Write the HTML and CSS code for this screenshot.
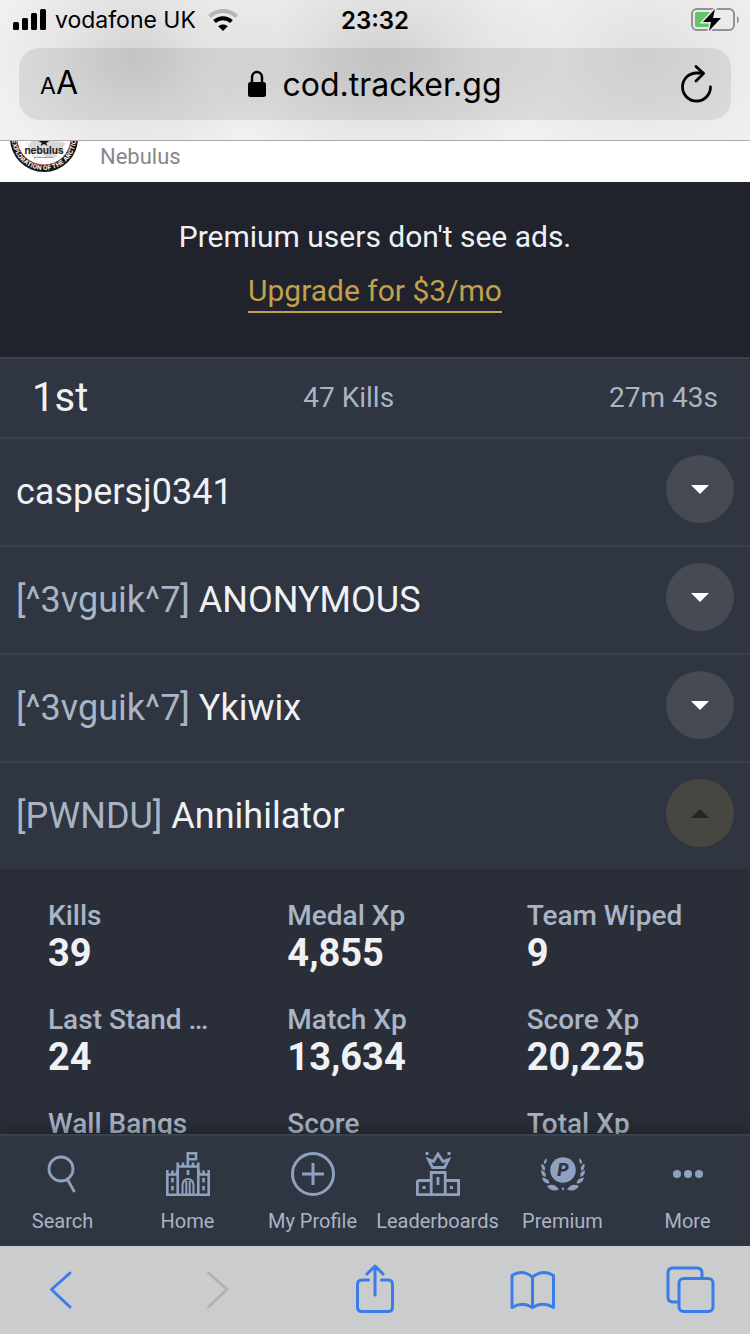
FILE: index.html
```html
<!DOCTYPE html>
<html lang="en">
<head>
    <meta charset="UTF-8">
    <meta name="viewport" content="width=device-width, initial-scale=1.0">
    <title>Warzone Match - COD Tracker</title>
    <link rel="stylesheet" href="styles.css">
</head>
<body>
    <header class="browser-top">
        <div class="status-bar">
            <div class="carrier">
                <svg class="signal" width="34" height="22" viewBox="0 0 34 22">
                    <rect x="0" y="13" width="6" height="8" rx="1.5"/>
                    <rect x="9" y="9" width="6" height="12" rx="1.5"/>
                    <rect x="18" y="4" width="6" height="17" rx="1.5"/>
                    <rect x="27" y="0" width="6" height="21" rx="1.5"/>
                </svg>
                <span>vodafone UK</span>
                <svg class="wifi" width="30" height="22" viewBox="0 0 30 22" fill="none">
                    <path d="M1.500 7.500C9 0 21 0 28.500 7.500" stroke="#b5b5b5" stroke-width="4"/>
                    <path d="M6.500 12.500C11.500 8 18.500 8 23.500 12.500" stroke="#000" stroke-width="4"/>
                    <path d="M15 22L10.200 17.200C13 14.800 17 14.800 19.800 17.200Z" fill="#000"/>
                </svg>
            </div>
            <div class="clock">23:32</div>
            <svg class="battery" width="48" height="24" viewBox="0 0 48 24">
                <rect x="1" y="1" width="42" height="21" rx="5" fill="none" stroke="#929292" stroke-width="2"/>
                <path d="M46 8c2.500 1 2.500 6.500 0 7.500z" fill="#929292"/>
                <rect x="4" y="4" width="17" height="15" rx="2" fill="#65c466"/>
                <path d="M24 1L12 14h8l-2 9L30 10h-8l2-9z" fill="#000" stroke="#ececec" stroke-width="3" paint-order="stroke"/>
            </svg>
        </div>
        <div class="address-bar">
            <button class="text-size" aria-label="Text size"><span class="small-a">A</span><span class="big-a">A</span></button>
            <button class="address">
                <svg width="18" height="28" viewBox="0 0 18 28">
                    <path d="M4 13V7.500a5 5.500 0 0 1 10 0V13" fill="none" stroke="#000" stroke-width="2.500"/>
                    <rect x="0" y="12" width="18" height="15" rx="2.500"/>
                </svg>
                <span>cod.tracker.gg</span>
            </button>
            <button class="reload" aria-label="Reload">
                <svg width="32" height="38" viewBox="0 0 32 38" fill="none" stroke="#000" stroke-width="2.800" stroke-linecap="round" stroke-linejoin="round">
                    <path d="M29.500 22A14 14 0 1 1 15.500 8H22"/>
                    <path d="M15 1.500L22.500 8.500L15 16"/>
                </svg>
            </button>
        </div>
    </header>

    <main class="page">
        <div class="ad">
            <svg class="ad-logo" width="68" height="32" viewBox="0 37 68 32">
                <defs>
                    <path id="ring" d="M4 34A30 30 0 0 0 64 34"/>
                </defs>
                <circle cx="34" cy="34" r="34" fill="#171717"/>
                <circle cx="34" cy="34" r="27" fill="#fff" stroke="#b3423e" stroke-width="1"/>
                <path d="M34 37c8 0 17 0 21 2-2 8-9 14-17 15-4-3-8-6-16-6-4-3-4-8 0-11z" fill="#d8d8d8"/>
                <path d="M17 38l8 18M51 38l-7 18M22 52h25" stroke="#d0d0d0" stroke-width=".7"/>
                <path d="M34 33l1.500 4h4l-3.300 2 1.300 3-3.500-2-3.500 2 1.300-3-3.300-2h4z" fill="#111"/>
                <text class="logo-name" x="34" y="50" text-anchor="middle">nebulus</text>
                <path d="M24 53.500h20" stroke="#888" stroke-width="1" stroke-dasharray="2 .5"/>
                <text class="logo-ring"><textPath href="#ring" startOffset="50%" text-anchor="middle">EXPLORATION OF THE ARCTIC</textPath></text>
            </svg>
            <span class="ad-name">Nebulus</span>
        </div>

        <section class="premium">
            <p>Premium users don't see ads.</p>
            <a href="#">Upgrade for $3/mo</a>
        </section>

        <section class="team">
            <div class="team-header">
                <span class="place">1st</span>
                <span>47 Kills</span>
                <span>27m 43s</span>
            </div>
            <div class="player">
                <div class="player-name">caspersj0341</div>
                <button class="toggle" aria-label="Expand"></button>
            </div>
            <div class="player">
                <div class="player-name"><span class="clan">[^3vguik^7]</span> ANONYMOUS</div>
                <button class="toggle" aria-label="Expand"></button>
            </div>
            <div class="player">
                <div class="player-name"><span class="clan">[^3vguik^7]</span> Ykiwix</div>
                <button class="toggle" aria-label="Expand"></button>
            </div>
            <div class="player">
                <div class="player-name"><span class="clan">[PWNDU]</span> Annihilator</div>
                <button class="toggle open" aria-label="Collapse"></button>
            </div>
        </section>

        <dl class="stats">
            <div class="stat"><dt>Kills</dt><dd>39</dd></div>
            <div class="stat"><dt>Medal Xp</dt><dd>4,855</dd></div>
            <div class="stat"><dt>Team Wiped</dt><dd>9</dd></div>
            <div class="stat"><dt>Last Stand …</dt><dd>24</dd></div>
            <div class="stat"><dt>Match Xp</dt><dd>13,634</dd></div>
            <div class="stat"><dt>Score Xp</dt><dd>20,225</dd></div>
            <div class="stat"><dt>Wall Bangs</dt></div>
            <div class="stat"><dt>Score</dt></div>
            <div class="stat"><dt>Total Xp</dt></div>
        </dl>
    </main>

    <nav class="tabs">
        <a href="#">
            <svg width="44" height="44" viewBox="0 0 44 44" fill="none" stroke="#8ea2c0" stroke-width="2.800">
                <circle cx="20" cy="17" r="12"/>
                <path d="M26.500 27.500L33.500 40"/>
            </svg>
            <span>Search</span>
        </a>
        <a href="#">
            <svg width="44" height="44" viewBox="0 0 44 44" fill="none" stroke="#8ea2c0" stroke-width="2.600">
                <path d="M1.300 18v24.700h41.400V18M1.300 22.500h10.500M32.400 22.500h10.500M6.500 18.500v4M11 18.500v4M33 18.500v4M37.500 18.500v4"/>
                <path d="M11.700 43V10.500M32.300 43V10.500M11.700 14.500h20.600M17 10.500v4M27 10.500v4M21.800 14.500V1.300h8.200v6h-8.200"/>
                <path d="M22 18v5M6.500 26v4.500M6.500 34v4.500M37.500 26v4.500M37.500 34v4.500"/>
                <path d="M16.500 43V33a5.500 6 0 0 1 11 0v10M20.300 43V29M23.700 43V29" stroke-width="2"/>
            </svg>
            <span>Home</span>
        </a>
        <a href="#">
            <svg width="44" height="44" viewBox="0 0 44 44" fill="none" stroke="#8ea2c0" stroke-width="3">
                <circle cx="22" cy="22" r="20.500"/>
                <path d="M22 11v22M11 22h22"/>
            </svg>
            <span>My Profile</span>
        </a>
        <a href="#">
            <svg width="44" height="44" viewBox="0 0 44 44" fill="none" stroke="#8ea2c0" stroke-width="2.800">
                <path d="M12.500 7.500l4 8h12l4-8-5.500 2L22 2l-4.500 7.500z"/>
                <path d="M15.200 42.600V20.500h14v22.100M1.400 28.500h14M29.200 28.500h13.400v14.100H1.400V28.500M22 25v8"/>
                <path d="M9.500 1.500h3M31.500 1.500h3M6.500 35.500h3M34 35.500h3" stroke-width="3"/>
            </svg>
            <span>Leaderboards</span>
        </a>
        <a href="#">
            <svg width="44" height="44" viewBox="0 0 44 44" fill="#8ea2c0">
                <circle cx="22" cy="18" r="12.800"/>
                <text class="premium-mark" x="22" y="24" text-anchor="middle">P</text>
                <g id="laurel">
                    <path d="M5.500 6q-4 4 -2 6 3-1 2-6z"/>
                    <path d="M.8 11.500q-1.500 5 2.500 7.500 2.500-4-2.500-7.500z"/>
                    <path d="M0 18q0 6 4.500 7 1.500-5-4.500-7z"/>
                    <path d="M1 25.500q1 6 7.500 6 0-5-7.500-6z"/>
                    <path d="M6 34q4 6.500 12 3.500-4.500-7-12-3.500z"/>
                </g>
                <use href="#laurel" transform="matrix(-1 0 0 1 44 0)"/>
                <circle cx="22" cy="36.800" r="1.200"/>
            </svg>
            <span>Premium</span>
        </a>
        <a href="#">
            <svg width="44" height="44" viewBox="0 0 44 44" fill="#8ea2c0">
                <circle cx="11" cy="22" r="4"/>
                <circle cx="22" cy="22" r="4"/>
                <circle cx="33" cy="22" r="4"/>
            </svg>
            <span>More</span>
        </a>
    </nav>

    <footer class="toolbar">
        <button aria-label="Back">
            <svg width="52" height="52" viewBox="0 0 52 52"><path d="M36 9L17.500 25.500L36 43"/></svg>
        </button>
        <button aria-label="Forward" disabled>
            <svg width="52" height="52" viewBox="0 0 52 52"><path d="M16.500 9L35 25.500L16.500 43"/></svg>
        </button>
        <button aria-label="Share">
            <svg width="52" height="52" viewBox="0 0 52 52"><path d="M19.500 16H13q-4.500 0-4.500 4.500V43q0 4.500 4.500 4.500h26q4.500 0 4.500-4.500V20.500Q43.500 16 39 16h-6.500M26 31V2.500M18 10l8-8 8 8"/></svg>
        </button>
        <button aria-label="Bookmarks">
            <svg width="52" height="52" viewBox="0 0 52 52"><path d="M25.500 13Q15 5 5 11.500V43.500Q15 37 25.500 43.500Q36 37 46.500 43.500V11.500Q36 5 25.500 13zM25.500 13V43"/></svg>
        </button>
        <button aria-label="Tabs">
            <svg width="52" height="52" viewBox="0 0 52 52"><path d="M14 38H9q-5 0-5-5V9q0-5 5-5h24q5 0 5 5v5"/><rect x="15" y="14.500" width="34" height="33" rx="4.500"/></svg>
        </button>
    </footer>
</body>
</html>
```
FILE: styles.css
```css
* {
    box-sizing: border-box;
}

body {
    margin: 0;
    height: 100vh;
    display: flex;
    flex-direction: column;
    font-family: Roboto, sans-serif;
    background-color: #2a2e38;
    color: #eff1f4;
}

button {
    padding: 0;
    border: none;
    background: none;
    color: inherit;
    font-family: inherit;
    cursor: pointer;
}

svg {
    display: block;
    flex-shrink: 0;
}

/* Browser top bar */
.browser-top {
    padding-bottom: 20px;
    border-bottom: 1px solid #aaa;
    background:
        radial-gradient(ellipse 150px 120px at 18% 40%, rgba(0, 0, 0, 0.12), rgba(0, 0, 0, 0.05) 50%, transparent),
        radial-gradient(ellipse 180px 120px at 51% 40%, rgba(0, 0, 0, 0.13), rgba(0, 0, 0, 0.06) 50%, transparent),
        radial-gradient(ellipse 160px 120px at 86% 40%, rgba(0, 0, 0, 0.07), rgba(0, 0, 0, 0.03) 50%, transparent),
        #f2f1f2;
    font-family: Inter, sans-serif;
    color: #000;
}

.status-bar {
    height: 40px;
    margin-bottom: 8px;
    padding: 0 11px;
    display: grid;
    grid-template-columns: 1fr auto 1fr;
    align-items: center;
    font-size: 24px;
}

.carrier {
    padding-left: 2px;
    display: flex;
    align-items: center;
    gap: 8px;
    font-size: 23px;
}

.wifi {
    margin-left: 4px;
}

.clock {
    font-weight: 600;
}

.battery {
    justify-self: end;
}

.address-bar {
    height: 72px;
    margin: 0 19px;
    padding: 0 18px;
    display: grid;
    grid-template-columns: 1fr auto 1fr;
    align-items: center;
    border-radius: 20px;
    background-color: rgba(0, 0, 0, 0.08);
}

.text-size {
    padding-left: 3px;
    display: flex;
    align-items: baseline;
    line-height: 32px;
}

.small-a {
    font-size: 23px;
}

.big-a {
    font-size: 32px;
}

.address {
    display: flex;
    align-items: center;
    gap: 16px;
    font-size: 32px;
}

.reload {
    justify-self: end;
}

/* Page */
.page {
    flex: 1;
    min-height: 0;
    overflow: hidden;
}

.ad {
    height: 41px;
    padding: 0 10px;
    display: flex;
    align-items: flex-start;
    gap: 22px;
    background-color: #fff;
    color: #85888c;
}

.ad-name {
    font-size: 22px;
    line-height: 32px;
}

.logo-name {
    font: bold 10px Inter, sans-serif;
    fill: #222;
}

.logo-ring {
    font: bold 6px Inter, sans-serif;
    fill: #fff;
    dominant-baseline: middle;
}

.premium {
    padding: 37px 16px 44px;
    text-align: center;
    background-color: #20232b;
    font-size: 30px;
    line-height: 36px;
}

.premium p {
    margin: 0 0 18px;
}

.premium a {
    display: inline-block;
    color: #c2a04e;
    text-decoration: none;
    border-bottom: 2px solid #c2a04e;
    padding-bottom: 2px;
}

.team {
    background-color: #2f3541;
}

.team-header {
    height: 80px;
    padding: 0 32px 2px;
    display: flex;
    justify-content: space-between;
    align-items: center;
    border-top: 2px solid #3a404c;
    color: #a9b4c4;
    font-size: 28px;
}

.place {
    color: #eff1f4;
    font-size: 40px;
}

.player {
    padding: 16px 16px 22px;
    display: flex;
    justify-content: space-between;
    align-items: center;
    border-top: 2px solid #3a404c;
}

.player-name {
    padding-top: 6px;
    font-size: 36px;
    line-height: 42px;
}

.clan {
    color: #a9b4c4;
}

.toggle {
    width: 68px;
    height: 68px;
    display: flex;
    align-items: center;
    justify-content: center;
    border-radius: 50%;
    background-color: #464a52;
}

.toggle::before {
    content: "";
    border: 9px solid transparent;
    border-top-color: #fff;
    border-bottom-width: 0;
}

.toggle.open {
    background-color: #484640;
}

.toggle.open::before {
    border-top-width: 0;
    border-bottom: 9px solid #23262d;
}

.stats {
    margin: 0;
    padding: 31px 16px;
    display: grid;
    grid-template-columns: repeat(3, 1fr);
    row-gap: 30px;
    background-color: #2a2e38;
}

.stat {
    padding: 0 16px 0 32px;
}

.stat dt {
    color: #a9b4c4;
    font-size: 28px;
    font-weight: 500;
    line-height: 32px;
    white-space: nowrap;
}

.stat dd {
    margin: 0;
    font-size: 38px;
    font-weight: 700;
    line-height: 42px;
}

/* Site tabs */
.tabs {
    position: relative;
    height: 112px;
    display: grid;
    grid-template-columns: repeat(6, 1fr);
    border-top: 2px solid #3a404c;
    background-color: #2f3541;
    box-shadow: 0 0 20px rgba(0, 0, 0, 0.4);
}

.tabs a {
    padding-top: 16px;
    display: flex;
    flex-direction: column;
    align-items: center;
    gap: 13px;
    color: #a9b4c4;
    font-size: 20px;
    line-height: 24px;
    text-decoration: none;
}

.premium-mark {
    font: italic 900 18px Roboto, sans-serif;
    fill: #2f3541;
}

/* Browser toolbar */
.toolbar {
    position: relative;
    height: 88px;
    padding: 0 34px;
    display: flex;
    justify-content: space-between;
    align-items: center;
    background-color: #cacccd;
}

.toolbar path,
.toolbar rect {
    fill: none;
    stroke: #3b7ceb;
    stroke-width: 3;
    stroke-linecap: round;
    stroke-linejoin: round;
}

.toolbar button:disabled path {
    stroke: #b0b2b3;
}
```
